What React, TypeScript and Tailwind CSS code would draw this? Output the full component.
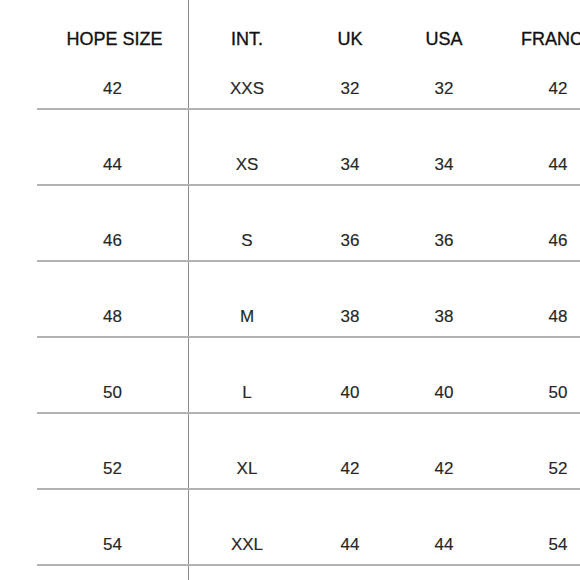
const headers = ["HOPE SIZE", "INT.", "UK", "USA", "FRANCE"];

const rows = [
  ["42", "XXS", "32", "32", "42"],
  ["44", "XS", "34", "34", "44"],
  ["46", "S", "36", "36", "46"],
  ["48", "M", "38", "38", "48"],
  ["50", "L", "40", "40", "50"],
  ["52", "XL", "42", "42", "52"],
  ["54", "XXL", "44", "44", "54"],
];

const widths = ["w-[152px]", "w-[116px]", "w-[90px]", "w-[98px]", "w-[130px]"];

export default function App() {
  return (
    <div
      className="w-[580px] h-[580px] overflow-hidden bg-white"
      style={{ fontFamily: '"Liberation Sans", Arial, Helvetica, sans-serif' }}
    >
      <div className="ml-[37px] w-[586px]">
        <div className="flex h-[77px]">
          {headers.map((h, i) => (
            <div
              key={h}
              className={`${widths[i]} shrink-0 flex items-center justify-center text-[18px] leading-[20px] text-[#111] [-webkit-text-stroke:0.35px_#111] ${
                i === 0 ? "border-r border-[#8c8c8c]" : ""
              } ${i === 0 ? "pl-[4px]" : ""}`}
            >
              {h}
            </div>
          ))}
        </div>
        {rows.map((row, r) => (
          <div
            key={row[0]}
            className={`flex border-b-2 border-[#b3b3b3] ${r === 0 ? "h-[33px]" : "h-[76px]"}`}
          >
            {row.map((cell, i) => (
              <div
                key={i}
                className={`${widths[i]} shrink-0 flex items-end justify-center pb-[9px] text-[17px] leading-[20px] text-[#262626] [-webkit-text-stroke:0.15px_#262626] ${
                  i === 0 ? "border-r border-[#8c8c8c]" : ""
                }`}
              >
                {cell}
              </div>
            ))}
          </div>
        ))}
        <div className="flex h-[40px]">
          <div className="w-[152px] shrink-0 border-r border-[#8c8c8c]" />
        </div>
      </div>
    </div>
  );
}
